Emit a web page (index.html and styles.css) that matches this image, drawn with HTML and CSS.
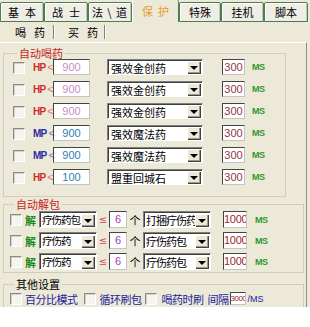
FILE: index.html
```html
<!DOCTYPE html>
<html lang="zh">
<head>
    <meta charset="UTF-8">
    <title>保护</title>
    <link rel="stylesheet" href="styles.css">
</head>
<body>
<div class="win">
    <div class="tabs">
        <div class="tab t1">基本</div>
        <div class="tab t2">战士</div>
        <div class="tab t3">法 \ 道</div>
        <div class="tab active">保护</div>
        <div class="tab t5">特殊</div>
        <div class="tab t6">挂机</div>
        <div class="tab t7">脚本</div>
    </div>
    <div class="subtabs">
        <div class="sub on">喝药</div>
        <i class="sep"></i>
        <div class="sub">买药</div>
        <i class="sep"></i>
    </div>
    <div class="panel">
        <!-- 自动喝药 -->
        <fieldset class="grp g1">
            <legend class="red">自动喝药</legend>
            <div class="row">
                <span class="chk"></span>
                <span class="cond hp">HP<em>&lt;</em></span>
                <span class="num val pink">900</span>
                <span class="combo c1"><span class="txt">强效金创药</span><span class="btn"></span></span>
                <span class="num ms">300</span>
                <b class="msl">MS</b>
            </div>
            <div class="row">
                <span class="chk"></span>
                <span class="cond hp">HP<em>&lt;</em></span>
                <span class="num val pink">900</span>
                <span class="combo c1"><span class="txt">强效金创药</span><span class="btn"></span></span>
                <span class="num ms">300</span>
                <b class="msl">MS</b>
            </div>
            <div class="row">
                <span class="chk"></span>
                <span class="cond hp">HP<em>&lt;</em></span>
                <span class="num val pink">900</span>
                <span class="combo c1"><span class="txt">强效金创药</span><span class="btn"></span></span>
                <span class="num ms">300</span>
                <b class="msl">MS</b>
            </div>
            <div class="row">
                <span class="chk"></span>
                <span class="cond mp">MP<em>&lt;</em></span>
                <span class="num val teal">900</span>
                <span class="combo c1"><span class="txt">强效魔法药</span><span class="btn"></span></span>
                <span class="num ms">300</span>
                <b class="msl">MS</b>
            </div>
            <div class="row">
                <span class="chk"></span>
                <span class="cond mp">MP<em>&lt;</em></span>
                <span class="num val teal">900</span>
                <span class="combo c1"><span class="txt">强效魔法药</span><span class="btn"></span></span>
                <span class="num ms">300</span>
                <b class="msl">MS</b>
            </div>
            <div class="row last">
                <span class="chk"></span>
                <span class="cond hp">HP<em>&lt;</em></span>
                <span class="num val teal">100</span>
                <span class="combo c1"><span class="txt">盟重回城石</span><span class="btn"></span></span>
                <span class="num ms">300</span>
                <b class="msl">MS</b>
            </div>
        </fieldset>

        <!-- 自动解包 -->
        <fieldset class="grp g2">
            <legend class="red">自动解包</legend>
            <div class="row">
                <span class="chk"></span>
                <b class="jie">解</b>
                <span class="combo c2"><span class="txt">疗伤药包</span><span class="btn"></span></span>
                <span class="sym">≤</span>
                <span class="num cnt">6</span>
                <span class="ge">个</span>
                <span class="combo c3"><span class="txt">打捆疗伤药</span><span class="btn"></span></span>
                <span class="num ms2">1000</span>
                <b class="msl m2">MS</b>
            </div>
            <div class="row">
                <span class="chk"></span>
                <b class="jie">解</b>
                <span class="combo c2"><span class="txt">疗伤药</span><span class="btn"></span></span>
                <span class="sym">≤</span>
                <span class="num cnt">6</span>
                <span class="ge">个</span>
                <span class="combo c3"><span class="txt">疗伤药包</span><span class="btn"></span></span>
                <span class="num ms2">1000</span>
                <b class="msl m2">MS</b>
            </div>
            <div class="row">
                <span class="chk"></span>
                <b class="jie">解</b>
                <span class="combo c2"><span class="txt">疗伤药</span><span class="btn"></span></span>
                <span class="sym">≤</span>
                <span class="num cnt">6</span>
                <span class="ge">个</span>
                <span class="combo c3"><span class="txt">疗伤药包</span><span class="btn"></span></span>
                <span class="num ms2">1000</span>
                <b class="msl m2">MS</b>
            </div>
        </fieldset>

        <!-- 其他设置 -->
        <fieldset class="grp g3">
            <legend>其他设置</legend>
            <div class="row opts">
                <span class="chk"></span>
                <span class="opt o1">百分比模式</span>
                <span class="chk k2"></span>
                <span class="opt o2">循环刷包</span>
                <span class="chk k3"></span>
                <span class="opt o3">喝药时刷</span>
                <span class="opt o4">间隔</span>
                <span class="num gap">3000</span>
                <span class="unit">/MS</span>
            </div>
        </fieldset>
    </div>
</div>
</body>
</html>
```

FILE: styles.css
```css
body {
    margin: 0;
    background: #fff;
    font-family: "Noto Sans CJK SC", sans-serif;
    font-size: 11px;
    color: #000;
}
.win {
    width: 310px;
    height: 307px;
    background: #ece9d8;
    overflow: hidden;
}

/* top tabs */
.tabs {
    display: flex;
    align-items: flex-end;
    height: 22px;
}
.tab {
    box-sizing: border-box;
    height: 20px;
    line-height: 18px;
    text-align: center;
    white-space: nowrap;
    background: #efeee6;
    border: 1px solid #4d7d4d;
    border-radius: 2px 2px 0 0;
    box-shadow: inset 1px 1px #fff, inset -1px 0 #b9cdb4;
}
.t1, .t2 {
    width: 44px;
    letter-spacing: 6px;
    text-indent: 6px;
}
.t3 { width: 44px; letter-spacing: 1px; }
.t5 { width: 42px; }
.t6 { width: 43px; }
.t7 { width: 44px; }
.tab.active {
    width: 47px;
    height: 22px;
    line-height: 22px;
    background: #ece9d8;
    border: none;
    border-left: 1px solid #fff;
    border-right: 1px solid #4d7d4d;
    box-shadow: none;
    color: #e79a2e;
    letter-spacing: 5px;
    text-indent: 5px;
}

/* sub tabs */
.subtabs {
    display: flex;
    align-items: center;
    height: 20px;
    padding-left: 15px;
}
.sub {
    width: 36px;
    letter-spacing: 8px;
    line-height: 14px;
    white-space: nowrap;
}
.sub.on { width: 38px; }
.sep {
    width: 1px;
    height: 14px;
    background: #7f7f7f;
    border-right: 1px solid #fff;
    margin-right: 13px;
}

/* panel */
.panel {
    width: 303px;
    height: 264px;
    border-top: 1px solid #fff;
    border-right: 1px solid #8c8c8c;
    padding-left: 3px;
}
.grp {
    margin: 0;
    padding: 0 0 0 6px;
    border: 1px solid #d0cdbe;
    min-inline-size: 0;
}
.grp legend {
    padding: 0 2px;
    margin-left: 4px;
    line-height: 12px;
}
.red { color: #c81e1e; }
.g1 {
    width: 283px;
    box-sizing: border-box;
    margin-top: 4px;
    padding-left: 9px;
    padding-bottom: 11px;
}
.g2 {
    width: 301px;
    box-sizing: border-box;
    margin-top: 1px;
    padding-bottom: 2px;
}
.g3 {
    width: 301px;
    box-sizing: border-box;
    margin-top: 5px;
}

.row {
    display: flex;
    align-items: center;
    height: 16px;
    margin-bottom: 6px;
}
.g1 .row.last {
    margin-top: 1px;
    margin-bottom: 0;
}
.g2 .row {
    height: 17px;
    margin-top: 1px;
    margin-bottom: 4px;
}
.g2 .row:last-of-type { margin-bottom: 0; }

/* controls */
.chk {
    box-sizing: border-box;
    width: 12px;
    height: 12px;
    background: #f5f4ef;
    border-top: 1px solid #8a8a8a;
    border-left: 1px solid #8a8a8a;
    border-bottom: 1px solid #fff;
    border-right: 1px solid #fff;
    box-shadow: inset 1px 1px #d4d2c8;
    flex: none;
}
.g1 .chk {
    align-self: flex-start;
    margin-top: 3px;
}
.num {
    box-sizing: border-box;
    height: 16px;
    background: #fff;
    border: 1px solid;
    border-color: #444 #c4c4c4 #c4c4c4 #444;
    font-family: "Liberation Sans", sans-serif;
    font-size: 11px;
    line-height: 14px;
    text-align: center;
    white-space: nowrap;
    overflow: hidden;
    flex: none;
}
.cond {
    width: 20px;
    margin-left: 8px;
    font-family: "Liberation Sans", sans-serif;
    font-weight: bold;
    font-size: 10px;
    letter-spacing: -0.8px;
    white-space: nowrap;
}
.cond em {
    font-style: normal;
    font-weight: normal;
    font-size: 11px;
    margin-left: 2px;
    opacity: 0.6;
}
.hp { color: #d02c2c; }
.mp { color: #2c2ca8; }
.val { width: 37px; }
.pink { color: #c68cc6; }
.teal { color: #2a82aa; }

.combo {
    box-sizing: border-box;
    display: flex;
    align-items: center;
    height: 16px;
    background: #fff;
    border: 1px solid;
    border-color: #7f7f7f #fff #fff #7f7f7f;
    box-shadow: inset 1px 1px #404040;
    padding: 1px 1px 0 3px;
    overflow: hidden;
    flex: none;
}
.combo .txt {
    flex: 1;
    min-width: 0;
    white-space: nowrap;
    overflow: hidden;
    line-height: 14px;
}
.combo .btn {
    box-sizing: border-box;
    width: 14px;
    height: 13px;
    background: #ece9d8;
    box-shadow: inset 1px 1px #fff, inset -1px -1px #404040, inset -2px -2px #9c9a90;
    display: flex;
    align-items: center;
    justify-content: center;
    flex: none;
}
.combo .btn::after {
    content: "";
    border-left: 4px solid transparent;
    border-right: 4px solid transparent;
    border-top: 4px solid #000;
    margin-top: 1px;
}
.c1 { width: 96px; margin-left: 17px; }
.c2 { width: 58px; margin-left: 2px; padding-left: 2px; height: 17px; }
.c3 { width: 68px; height: 17px; padding-left: 2px; }
.c2 .txt { letter-spacing: -1px; font-size: 10.5px; }
.c3 .txt { letter-spacing: -1px; }

.ms {
    width: 23px;
    margin-left: 19px;
    color: #8e3646;
}
.msl {
    margin-left: 7px;
    color: #2d9a2d;
    font-family: "Liberation Sans", sans-serif;
    font-size: 9px;
    letter-spacing: -0.5px;
}
.m2 { margin-left: 8px; }

.jie {
    width: 12px;
    margin-left: 3px;
    color: #1b8a1b;
    font-weight: bold;
}
.sym {
    width: 12px;
    text-align: center;
    color: #d04060;
    font-family: "DejaVu Sans", sans-serif;
    font-size: 10px;
}
.cnt {
    width: 18px;
    height: 17px;
    color: #a040c0;
}
.ge {
    width: 16px;
    text-align: center;
}
.ms2 {
    width: 24px;
    height: 17px;
    margin-left: 12px;
    color: #a02430;
    text-align: left;
    letter-spacing: -0.3px;
}

.opts {
    margin-top: 2px;
    height: 13px;
}
.opt {
    color: #23239c;
    letter-spacing: -0.5px;
    white-space: nowrap;
}
.o1 { margin-left: 3px; }
.k2 { margin-left: 6px; }
.o2 { margin-left: 4px; }
.k3 { margin-left: 3px; }
.o3 { margin-left: 5px; }
.o4 { margin-left: 4px; margin-right: 1px; }
.gap {
    width: 16px;
    height: 13px;
    font-size: 8px;
    line-height: 11px;
    letter-spacing: -0.5px;
    color: #a02430;
}
.unit {
    margin-left: 2px;
    color: #23239c;
    font-family: "Liberation Sans", sans-serif;
    font-size: 9px;
}
```
